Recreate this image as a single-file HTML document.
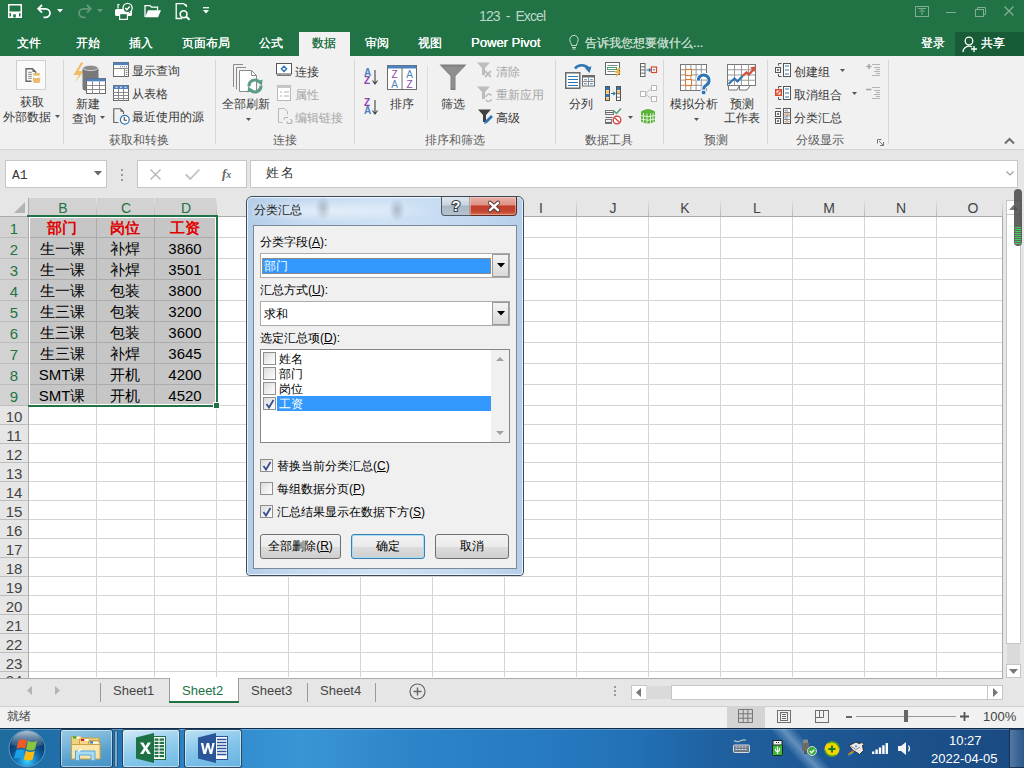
<!DOCTYPE html>
<html><head><meta charset="utf-8"><style>
*{box-sizing:border-box;margin:0;padding:0}
html,body{width:1024px;height:768px;overflow:hidden;background:#e6e6e6;font-family:"Liberation Sans",sans-serif;position:relative}
.a{position:absolute}
.t{position:absolute;white-space:nowrap;line-height:1}
svg{position:absolute;overflow:visible}
.tab{position:absolute;top:37px;color:#fff;font-size:12px;line-height:12px;white-space:nowrap;text-shadow:0.35px 0 0}
.r{position:absolute;font-size:12px;line-height:12px;color:#383838;white-space:nowrap}
.g{position:absolute;font-size:12px;line-height:12px;color:#5a5a5a;white-space:nowrap}
.d{color:#a6a6a6}
.sep{position:absolute;top:60px;width:1px;height:84px;background:#d6d6d6}
.gl{position:absolute;background:#d4d4d4}
.cell{position:absolute;font-size:15px;line-height:15px;white-space:nowrap;color:#000}
.dl{position:absolute;font-size:12px;line-height:12px;color:#000;white-space:nowrap}
.cb{position:absolute;width:13px;height:13px;border:1px solid #8f8f8f;background:linear-gradient(135deg,#dcdcdc,#fff)}
.btn{position:absolute;height:25px;border:1px solid #707070;border-radius:3px;background:linear-gradient(#f2f2f2 0,#ebebeb 50%,#dddddd 51%,#cfcfcf 100%);font-size:12px;line-height:22px;text-align:center;color:#000}
</style></head><body>
<div class="a" style="left:0;top:0;width:1024px;height:56px;background:#217346"></div>
<div class="a" style="left:0;top:32px;width:59px;height:24px;background:#227447"></div>
<svg style="left:8px;top:4px" width="14" height="14" viewBox="0 0 14 14"><rect x="0.75" y="0.75" width="12.5" height="12.5" fill="none" stroke="#fff" stroke-width="1.5"/><rect x="0.75" y="7.5" width="12.5" height="1.6" fill="#fff"/><rect x="3" y="8.5" width="8" height="5" fill="#fff"/><rect x="5.2" y="10.3" width="2.6" height="3.2" fill="#217346"/></svg>
<svg style="left:37px;top:4px" width="15" height="14" viewBox="0 0 15 14"><path d="M5 1L1.2 4.8 5 8.6" fill="none" stroke="#fff" stroke-width="1.8"/><path d="M1.5 4.8H8.5a4.5 4.3 0 0 1 0 8.6H6.5" fill="none" stroke="#fff" stroke-width="1.8"/></svg>
<svg style="left:57px;top:9px" width="6" height="4" viewBox="0 0 6 4"><path d="M0 0h6L3 3.5z" fill="#fff"/></svg>
<svg style="left:77px;top:4px" width="15" height="14" viewBox="0 0 15 14"><path d="M10 1l3.8 3.8L10 8.6" fill="none" stroke="#5f9a79" stroke-width="1.8"/><path d="M13.5 4.8H6.5a4.5 4.3 0 0 0 0 8.6H8.5" fill="none" stroke="#5f9a79" stroke-width="1.8"/></svg>
<svg style="left:97px;top:9px" width="6" height="4" viewBox="0 0 6 4"><path d="M0 0h6L3 3.5z" fill="#5f9a79"/></svg>
<svg style="left:115px;top:3px" width="18" height="17" viewBox="0 0 18 17"><path d="M4.5 1.5h-1.5v4" fill="none" stroke="#fff" stroke-width="1.2"/><path d="M1.5 6h14a1.5 1.5 0 0 1 1.5 1.5v4a1.5 1.5 0 0 1-1.5 1.5h-14a1.5 1.5 0 0 1-1.5-1.5v-4A1.5 1.5 0 0 1 1.5 6z" fill="#fff"/><rect x="4.6" y="10.6" width="7.8" height="5.8" fill="#217346" stroke="#fff" stroke-width="1.2"/><circle cx="12.6" cy="5" r="4.6" fill="#217346" stroke="#fff" stroke-width="1.3"/><path d="M10.3 5l1.6 1.7 2.8-3.2" fill="none" stroke="#fff" stroke-width="1.4"/><circle cx="14.6" cy="9.2" r="0.8" fill="#217346"/></svg>
<svg style="left:144px;top:4px" width="18" height="14" viewBox="0 0 18 14"><path d="M1 13V1.6h5l1.5 1.5H13.5V6" fill="none" stroke="#fff" stroke-width="1.3"/><path d="M1 13.2L4 6.2H17L14 13.2z" fill="#fff"/></svg>
<svg style="left:175px;top:3px" width="16" height="17" viewBox="0 0 16 17"><path d="M7 15.5H1.2V0.7h7.8M9 0.7l3 3" fill="none" stroke="#fff" stroke-width="1.3"/><path d="M9.5 1.5l1.8 0.2 0.2 1.8" fill="none" stroke="#fff" stroke-width="0.9"/><circle cx="8.6" cy="11.2" r="3.4" fill="none" stroke="#fff" stroke-width="1.6"/><path d="M11 13.6l3.6 3.2" stroke="#fff" stroke-width="2"/></svg>
<svg style="left:203px;top:7px" width="6" height="7" viewBox="0 0 6 7"><path d="M0 0.7h6" stroke="#fff" stroke-width="1.3"/><path d="M0 3h6L3 6.5z" fill="#fff"/></svg>
<div class="t" style="left:479px;top:9px;font-size:14px;color:#bcd6c6;letter-spacing:-0.9px;word-spacing:3px">123 - Excel</div>
<svg style="left:915px;top:6px" width="14" height="11" viewBox="0 0 14 11"><rect x="0.5" y="0.5" width="13" height="10" fill="none" stroke="#7fae93"/><path d="M3 2.5h8M7 4v5M4.5 6L7 3.5 9.5 6" fill="none" stroke="#7fae93"/></svg>
<div class="a" style="left:946px;top:12px;width:10px;height:1px;background:#7fae93"></div>
<svg style="left:975px;top:7px" width="11" height="10" viewBox="0 0 11 10"><rect x="0.5" y="2.5" width="8" height="7" fill="none" stroke="#7fae93"/><path d="M2.5 2.5V0.5h8v7h-2" fill="none" stroke="#7fae93"/></svg>
<svg style="left:1004px;top:6px" width="10" height="10" viewBox="0 0 10 10"><path d="M0.5 0.5l9 9M9.5 0.5l-9 9" stroke="#7fae93" stroke-width="1.4"/></svg>
<div class="tab" style="left:17px">文件</div>
<div class="tab" style="left:76px">开始</div>
<div class="tab" style="left:129px">插入</div>
<div class="tab" style="left:182px">页面布局</div>
<div class="tab" style="left:259px">公式</div>
<div class="tab" style="left:365px">审阅</div>
<div class="tab" style="left:418px">视图</div>
<div class="a" style="left:299px;top:32px;width:51px;height:24px;background:#f1f1f1"></div>
<div class="tab" style="left:312px;color:#217346">数据</div>
<div class="tab" style="left:471px;top:36px;font-size:13px;line-height:13px">Power Pivot</div>
<svg style="left:569px;top:35px" width="10" height="15" viewBox="0 0 10 15"><path d="M2.5 10.5C2.5 8 0.8 7 0.8 4.6a4.2 4.2 0 0 1 8.4 0C9.2 7 7.5 8 7.5 10.5z" fill="none" stroke="#c4dccd" stroke-width="1"/><path d="M3 12.5h4M3.5 14h3" stroke="#c4dccd"/></svg>
<div class="tab" style="left:585px;color:#c4dccd">告诉我您想要做什么...</div>
<div class="tab" style="left:921px">登录</div>
<div class="a" style="left:955px;top:32px;width:69px;height:24px;background:#185c37"></div>
<svg style="left:962px;top:36px" width="16" height="17" viewBox="0 0 16 17"><circle cx="7" cy="5" r="3.8" fill="none" stroke="#fff" stroke-width="1.3"/><path d="M1 16a6 6 0 0 1 9-5" fill="none" stroke="#fff" stroke-width="1.3"/><path d="M12 10v6M9 13h6" stroke="#fff" stroke-width="1.3"/></svg>
<div class="tab" style="left:981px">共享</div>
<div class="a" style="left:0;top:56px;width:1024px;height:94px;background:#f1f1f1;border-bottom:1px solid #d4d4d4"></div>
<div class="sep" style="left:63px;top:60px;height:84px"></div>
<div class="sep" style="left:215px;top:60px;height:84px"></div>
<div class="sep" style="left:354px;top:60px;height:84px"></div>
<div class="sep" style="left:555px;top:60px;height:84px"></div>
<div class="sep" style="left:663px;top:60px;height:84px"></div>
<div class="sep" style="left:767px;top:60px;height:84px"></div>
<div class="sep" style="left:888px;top:60px;height:84px"></div>
<div class="sep" style="left:427px;top:66px;height:55px;background:#dedede"></div>
<div class="g" style="left:109px;top:134px">获取和转换</div>
<div class="g" style="left:273px;top:134px">连接</div>
<div class="g" style="left:425px;top:134px">排序和筛选</div>
<div class="g" style="left:585px;top:134px">数据工具</div>
<div class="g" style="left:704px;top:134px">预测</div>
<div class="g" style="left:796px;top:134px">分级显示</div>
<svg style="left:877px;top:139px" width="7" height="7" viewBox="0 0 7 7"><path d="M0.5 0.5h4M0.5 0.5v4M2 2l4.5 4.5M6.5 3v3.5H3" fill="none" stroke="#777" stroke-width="1"/></svg>
<svg style="left:1004px;top:137px" width="11" height="8" viewBox="0 0 11 8"><path d="M1 6.5l4.5-4.5L10 6.5" fill="none" stroke="#6e6e6e" stroke-width="2"/></svg>
<div class="a" style="left:16px;top:60px;width:30px;height:30px;background:#fafafa;border:1px solid #cfcfcf"></div>
<svg style="left:25px;top:68px" width="16" height="16" viewBox="0 0 16 16"><path d="M6.5 13.25H1V0.75H7.5L10.75 4V5" fill="none" stroke="#666" stroke-width="1.3"/><path d="M7.5 0.75V4H10.75z" fill="#666"/><path d="M3.2 4.3h3.6M3.2 6.3h3.6M3.2 8.3h3.6M3.2 10.3h3.6" stroke="#8a8a8a"/><ellipse cx="11.6" cy="6.2" rx="3.6" ry="1.5" fill="#e8bd70"/><path d="M8 8.6V13.5A3.6 1.5 0 0 0 15.2 13.5V8.6A3.6 1.5 0 0 1 8 8.6z" fill="#e8bd70"/></svg>
<div class="r" style="left:20px;top:96px">获取</div>
<div class="r" style="left:3px;top:111px">外部数据</div>
<svg style="left:55px;top:115px" width="5" height="3" viewBox="0 0 5 3"><path d="M0 0h5L2.5 3z" fill="#555"/></svg>
<svg style="left:72px;top:62px" width="34" height="32" viewBox="0 0 34 32"><path d="M9 0.5L1.5 13h5.5L2.5 21l9.5-12H6.5l5-8.5z" fill="#f0bd66"/><path d="M10.5 6.5a8 3 0 0 1 16 0v20a8 3 0 0 1-16 0z" fill="#787878"/><ellipse cx="18.5" cy="6" rx="7.5" ry="2.6" fill="#8c8c8c" stroke="#e8e8e8" stroke-width="0.8"/><rect x="14.5" y="16.5" width="19" height="15" fill="#fff" stroke="#6b6b6b"/><rect x="14.5" y="16.5" width="19" height="2.8" fill="#4f81bd"/><path d="M14.5 23.5h19M14.5 27.5h19M20.5 19.3v12.2M27.5 19.3v12.2" stroke="#8a8a8a"/></svg>
<div class="r" style="left:76px;top:98px">新建</div>
<div class="r" style="left:72px;top:113px">查询</div>
<svg style="left:100px;top:116px" width="5" height="3" viewBox="0 0 5 3"><path d="M0 0h5L2.5 3z" fill="#555"/></svg>
<svg style="left:113px;top:62px" width="16" height="15" viewBox="0 0 16 15"><rect x="0.5" y="0.5" width="15" height="14" fill="#fff" stroke="#6b6b6b"/><rect x="0.5" y="0.5" width="15" height="2.6" fill="#4f81bd"/><path d="M0.5 6.5h15M11.5 6.5v8" stroke="#8a8a8a"/><path d="M7 4.8h1M9 4.8h1M11 4.8h1M13 4.8h1M12.8 8.5h1.5M12.8 10.5h1.5M12.8 12.5h1.5" stroke="#777"/></svg>
<div class="r" style="left:132px;top:65px">显示查询</div>
<svg style="left:113px;top:85px" width="16" height="16" viewBox="0 0 16 16"><rect x="0.5" y="0.5" width="15" height="15" fill="#fff" stroke="#6b6b6b"/><rect x="0.5" y="0.5" width="15" height="3.5" fill="#4f81bd"/><path d="M2.5 2.2h2M7 2.2h2M11.5 2.2h2" stroke="#fff"/><path d="M0.5 7.5h15M0.5 10.5h15M0.5 13.5h15M5.5 4v12M10.5 4v12" stroke="#8a8a8a"/></svg>
<div class="r" style="left:132px;top:88px">从表格</div>
<svg style="left:113px;top:108px" width="17" height="17" viewBox="0 0 17 17"><path d="M5.5 14.5H0.75V0.75H7.5L10.5 3.8V6" fill="none" stroke="#666" stroke-width="1.2"/><path d="M7.5 0.75V3.8H10.5z" fill="#666"/><circle cx="11.8" cy="11.8" r="4.4" fill="#fff" stroke="#2e75b6" stroke-width="1.2"/><path d="M11.3 9v3.3h2.6" fill="none" stroke="#444" stroke-width="1.1"/></svg>
<div class="r" style="left:132px;top:111px">最近使用的源</div>
<svg style="left:232px;top:63px" width="32" height="32" viewBox="0 0 32 32"><path d="M1.5 24V1.5H11" fill="none" stroke="#8a8a8a"/><path d="M4.5 26.5V4.5H14" fill="none" stroke="#8a8a8a"/><path d="M7.5 28.5V7.5H19.5l5 5V28.5z" fill="#fff" stroke="#8a8a8a"/><path d="M19.5 7.5v5h5" fill="none" stroke="#8a8a8a"/><circle cx="23" cy="23" r="8" fill="#f1f1f1" opacity="0"/><path d="M17 23.5A6 6 0 0 1 27.6 19.2" fill="none" stroke="#5a9e82" stroke-width="3"/><path d="M24.6 18.6L30.6 16.4L29.8 22.6z" fill="#5a9e82"/><path d="M29 22.5A6 6 0 0 1 18.4 26.8" fill="none" stroke="#5a9e82" stroke-width="3"/><path d="M21.4 27.4L15.4 29.6L16.2 23.4z" fill="#5a9e82"/></svg>
<div class="r" style="left:222px;top:98px">全部刷新</div>
<svg style="left:246px;top:118px" width="5" height="3" viewBox="0 0 5 3"><path d="M0 0h5L2.5 3z" fill="#555"/></svg>
<svg style="left:276px;top:63px" width="16" height="14" viewBox="0 0 16 14"><rect x="0.5" y="0.5" width="15" height="10.5" fill="#fff" stroke="#555"/><path d="M1 12.5h14" stroke="#777"/><path d="M4 11v2M12 11v2" stroke="#777"/><path d="M8 3.2l2.6 2.6L8 8.4 5.4 5.8z" fill="none" stroke="#2e75b6" stroke-width="1.4"/></svg>
<div class="r" style="left:295px;top:66px">连接</div>
<svg style="left:277px;top:85px" width="14" height="16" viewBox="0 0 14 16"><rect x="0.5" y="0.5" width="13" height="15" fill="#fff" stroke="#b8b8b8"/><rect x="0.5" y="0.5" width="13" height="2.5" fill="#c8c8c8"/><path d="M3 7h2M7 7h5M3 11h2M7 11h5" stroke="#b0b0b0"/></svg>
<div class="r d" style="left:295px;top:89px">属性</div>
<svg style="left:278px;top:108px" width="15" height="16" viewBox="0 0 15 16"><path d="M0.5 0.5h6l3 3v3M0.5 0.5v14h4" fill="none" stroke="#b8b8b8"/><path d="M6 11.5a2 2 0 0 1 2-2h2M9 13.5a2 2 0 0 0 2 2h1a2 2 0 0 0 0-4" fill="none" stroke="#b0b0b0" stroke-width="1.2"/></svg>
<div class="r d" style="left:295px;top:112px">编辑链接</div>
<div class="t" style="left:364px;top:69px;font-size:10px;line-height:8px;color:#4f81bd;font-weight:bold">A<br><span style="color:#8e44ad">Z</span></div>
<svg style="left:372px;top:70px" width="6" height="15" viewBox="0 0 6 15"><path d="M3 0v13M0.5 10.5L3 14l2.5-3.5" fill="none" stroke="#444" stroke-width="1.1"/></svg>
<div class="t" style="left:364px;top:99px;font-size:10px;line-height:8px;color:#8e44ad;font-weight:bold">Z<br><span style="color:#4f81bd">A</span></div>
<svg style="left:372px;top:100px" width="6" height="15" viewBox="0 0 6 15"><path d="M3 0v13M0.5 10.5L3 14l2.5-3.5" fill="none" stroke="#444" stroke-width="1.1"/></svg>
<svg style="left:387px;top:65px" width="30" height="25" viewBox="0 0 30 25"><rect x="0.5" y="0.5" width="29" height="24" fill="#fff" stroke="#6b6b6b"/><rect x="0.5" y="0.5" width="29" height="3" fill="#4f81bd"/><path d="M15 3v22" stroke="#6b6b6b"/><text x="7.5" y="13" font-size="10" font-family="Liberation Sans" text-anchor="middle" fill="#8e44ad">Z</text><text x="7.5" y="23" font-size="10" font-family="Liberation Sans" text-anchor="middle" fill="#4f81bd">A</text><text x="22.5" y="13" font-size="10" font-family="Liberation Sans" text-anchor="middle" fill="#4f81bd">A</text><text x="22.5" y="23" font-size="10" font-family="Liberation Sans" text-anchor="middle" fill="#8e44ad">Z</text></svg>
<div class="r" style="left:390px;top:98px">排序</div>
<svg style="left:439px;top:64px" width="28" height="27" viewBox="0 0 28 27"><path d="M0.5 0.5h27L16.5 12v14h-5V12z" fill="#7f7f7f"/><path d="M3 2.5h22l-9.5 10v12h-3v-12z" fill="#8f8f8f"/></svg>
<div class="r" style="left:441px;top:98px">筛选</div>
<svg style="left:477px;top:62px" width="16" height="16" viewBox="0 0 16 16"><path d="M0 0.5h13L8 6v7H5V6z" fill="#bdbdbd"/><path d="M8 9l6 6M14 9l-6 6" stroke="#bdbdbd" stroke-width="1.8"/></svg>
<div class="r d" style="left:496px;top:66px">清除</div>
<svg style="left:477px;top:86px" width="16" height="16" viewBox="0 0 16 16"><path d="M0 0.5h13L8 6v7H5V6z" fill="#bdbdbd"/><path d="M9 11a3 3 0 0 1 5.5-1.5M14.5 13a3 3 0 0 1-5.5 1" fill="none" stroke="#bdbdbd" stroke-width="1.5"/></svg>
<div class="r d" style="left:496px;top:89px">重新应用</div>
<svg style="left:478px;top:109px" width="16" height="16" viewBox="0 0 16 16"><path d="M0 0.5h13L8 6v7H5V6z" fill="#404040"/><path d="M6 15l1-3 6-6 2 2-6 6z" fill="#2e75b6"/></svg>
<div class="r" style="left:496px;top:112px">高级</div>
<svg style="left:565px;top:63px" width="32" height="26" viewBox="0 0 32 26"><path d="M10 5.5A8 7 0 0 1 23.5 5.5" fill="none" stroke="#2e75b6" stroke-width="2.4"/><path d="M19.5 4.5L26.5 3.5L24.5 10z" fill="#2e75b6"/><rect x="0.75" y="9.75" width="14" height="15.5" fill="#fff" stroke="#6b6b6b" stroke-width="1.5"/><path d="M3 13.5h10M3 16.5h10M3 19.5h10M3 22.5h10" stroke="#2e75b6"/><rect x="17.5" y="12.5" width="12" height="10.5" fill="#fff" stroke="#6b6b6b"/><rect x="17.5" y="12.5" width="12" height="2" fill="#6b6b6b"/><path d="M23.5 14.5v8.5M17.5 18.5h12" stroke="#8a8a8a"/><path d="M19.2 16.8h2.6M25.2 16.8h2.6M19.2 20.8h2.6M25.2 20.8h2.6" stroke="#2e75b6" stroke-width="1.1"/></svg>
<div class="r" style="left:569px;top:98px">分列</div>
<svg style="left:605px;top:62px" width="17" height="16" viewBox="0 0 17 16"><rect x="0.5" y="0.5" width="14" height="12" fill="#fff" stroke="#666"/><path d="M2.5 3.5h10M2.5 9.5h8" stroke="#888"/><rect x="2.5" y="5.5" width="9" height="2" fill="none" stroke="#4ea072"/><path d="M13 6l-3 5h2.5l-2 5 5.5-6.5h-2.5l2-3.5z" fill="#f2b43e"/></svg>
<svg style="left:605px;top:86px" width="17" height="15" viewBox="0 0 17 15"><rect x="0.5" y="0.5" width="4" height="14" fill="#fff" stroke="#555"/><rect x="1" y="1" width="3" height="3" fill="#2e75b6"/><rect x="1" y="4.5" width="3" height="3" fill="#f0c060"/><rect x="1" y="8" width="3" height="3" fill="#2e75b6"/><rect x="1" y="11.5" width="3" height="2.5" fill="#f0c060"/><rect x="11.5" y="0.5" width="4" height="14" fill="#fff" stroke="#555"/><rect x="12" y="1" width="3" height="3" fill="#2e75b6"/><rect x="12" y="4.5" width="3" height="3" fill="#f0c060"/><path d="M12 7.8h3M12 11.2h3" stroke="#555" stroke-width="0.8"/><path d="M6 7.5h4M8.3 5.8L10 7.5 8.3 9.2" fill="none" stroke="#2e75b6" stroke-width="1.2"/></svg>
<svg style="left:605px;top:108px" width="17" height="16" viewBox="0 0 17 16"><path d="M0.5 4.5h8M0.5 9.5h7M0.5 14.5h6" stroke="#666"/><rect x="0.5" y="2.5" width="8" height="4" fill="none" stroke="#777"/><rect x="0.5" y="11.5" width="6" height="4" fill="none" stroke="#777"/><path d="M9 3l2.5 2.5L16 0.5" fill="none" stroke="#4ea072" stroke-width="1.5"/><circle cx="12" cy="12" r="3.8" fill="#fff" stroke="#d43a3a" stroke-width="1.3"/><path d="M9.5 9.5l5 5" stroke="#d43a3a" stroke-width="1.3"/></svg>
<svg style="left:628px;top:116px" width="5" height="3" viewBox="0 0 5 3"><path d="M0 0h5L2.5 3z" fill="#555"/></svg>
<svg style="left:640px;top:63px" width="17" height="14" viewBox="0 0 17 14"><rect x="0.5" y="0.5" width="4.5" height="13" fill="#fff" stroke="#666"/><path d="M0.5 3.8h4.5M0.5 7h4.5M0.5 10.2h4.5" stroke="#666"/><path d="M6.5 7h4M9 5.5L10.5 7 9 8.5" fill="none" stroke="#2e75b6" stroke-width="1.2"/><rect x="11.5" y="4" width="5" height="5.5" fill="#fff" stroke="#d9482a" stroke-width="1.2"/><rect x="13.2" y="5.9" width="1.6" height="1.6" fill="#777"/></svg>
<svg style="left:640px;top:85px" width="17" height="17" viewBox="0 0 17 17"><rect x="0.5" y="6.5" width="5" height="5" fill="#fff" stroke="#b8b8b8"/><rect x="11.5" y="0.5" width="5" height="5" fill="#fff" stroke="#b8b8b8"/><rect x="11.5" y="11.5" width="5" height="5" fill="#fff" stroke="#b8b8b8"/><path d="M5.5 9l6-6M5.5 9l6 5" stroke="#b8b8b8"/></svg>
<svg style="left:640px;top:108px" width="16" height="16" viewBox="0 0 16 16"><path d="M1 3.5Q8 -1.5 15 3.5V13.5Q8 17.5 1 13.5z" fill="#5cb33a"/><path d="M3.5 5v9M7 5.5v9.5M10.5 5.5v9.5M13 5v8.5M1 7.5q7 2.5 14 0M1 11q7 2.5 14 0" fill="none" stroke="#fff" stroke-width="0.9" opacity="0.85"/></svg>
<svg style="left:680px;top:64px" width="32" height="31" viewBox="0 0 32 31"><rect x="0.5" y="0.5" width="26" height="26" fill="#fff" stroke="#777"/><path d="M5.7 0.5v26M10.9 0.5v26M16.1 0.5v26M21.3 0.5v26M0.5 5.7h26M0.5 10.9h26M0.5 16.1h26M0.5 21.3h26" stroke="#8a8a8a" stroke-width="0.9"/><rect x="5.5" y="5.5" width="6" height="6" fill="#fff" stroke="#e87722" stroke-width="1.1"/><rect x="5.5" y="15.5" width="6" height="6" fill="#fff" stroke="#e87722" stroke-width="1.1"/><path d="M18.3 16.5A5.4 5.4 0 1 1 26.8 20.8Q23.6 22.5 23.6 25.5" fill="none" stroke="#fff" stroke-width="5"/><path d="M18.3 16.5A5.4 5.4 0 1 1 26.8 20.8Q23.6 22.5 23.6 25.5" fill="none" stroke="#2e75b6" stroke-width="3"/><rect x="20.8" y="26" width="5.5" height="4.8" fill="#fff"/><rect x="21.8" y="26.8" width="3.6" height="3.4" fill="#2e75b6"/></svg>
<div class="r" style="left:670px;top:98px">模拟分析</div>
<svg style="left:694px;top:118px" width="5" height="3" viewBox="0 0 5 3"><path d="M0 0h5L2.5 3z" fill="#555"/></svg>
<svg style="left:727px;top:64px" width="30" height="28" viewBox="0 0 30 28"><path d="M1.5 21.5v4.5h8.5l2.5-4.5M12.5 21.5v4.5h7.5l3-4.5" fill="#fff" stroke="#777"/><rect x="0.5" y="0.5" width="28" height="21" fill="#fff" stroke="#777"/><path d="M7.5 0.5v21M14.5 0.5v21M21.5 0.5v21M0.5 5.75h28M0.5 11h28M0.5 16.25h28" stroke="#999"/><path d="M1.5 20L7.5 14.5L10.5 17.5L15.5 12" fill="none" stroke="#2e75b6" stroke-width="2.2"/><path d="M15.5 12L19.5 8.5L22 10.5L26.5 5.5" fill="none" stroke="#d4503a" stroke-width="2.2"/><path d="M23 3.5L28.5 2.3L27.5 8z" fill="#d4503a"/></svg>
<div class="r" style="left:730px;top:98px">预测</div>
<div class="r" style="left:724px;top:112px">工作表</div>
<svg style="left:775px;top:63px" width="16" height="14" viewBox="0 0 16 14"><path d="M6.5 0.5H3.5V2.5M3.5 11V13.5H6.5" fill="none" stroke="#555"/><rect x="0.5" y="4.5" width="5" height="5" fill="#fff" stroke="#555"/><path d="M3 5.8v2.4M1.8 7h2.4" stroke="#555"/><rect x="8.5" y="0.5" width="7" height="13" fill="#fff" stroke="#555"/><path d="M10 3h4M10 7h4M10 11h4" stroke="#2e75b6" stroke-width="1.2"/></svg>
<div class="r" style="left:794px;top:66px">创建组</div>
<svg style="left:840px;top:69px" width="5" height="3" viewBox="0 0 5 3"><path d="M0 0h5L2.5 3z" fill="#555"/></svg>
<svg style="left:775px;top:86px" width="16" height="14" viewBox="0 0 16 14"><path d="M6.5 0.5H3.5V2.5M3.5 11V13.5H6.5" fill="none" stroke="#555"/><rect x="0.75" y="3.75" width="5.5" height="5.5" fill="#fff" stroke="#d9482a" stroke-width="1.5"/><path d="M1.5 8.5L5.5 4.5" stroke="#d9482a" stroke-width="1.2"/><rect x="8.5" y="0.5" width="7" height="13" fill="#fff" stroke="#555"/><path d="M10 3h4M10 7h4M10 11h4" stroke="#2e75b6" stroke-width="1.2"/></svg>
<div class="r" style="left:794px;top:89px">取消组合</div>
<svg style="left:852px;top:92px" width="5" height="3" viewBox="0 0 5 3"><path d="M0 0h5L2.5 3z" fill="#555"/></svg>
<svg style="left:775px;top:108px" width="16" height="16" viewBox="0 0 16 16"><path d="M0.5 0.5H6" stroke="#666"/><rect x="0.5" y="3.5" width="5" height="5" fill="#fff" stroke="#555"/><path d="M3 4.8v2.4M1.8 6h2.4" stroke="#555"/><rect x="0.5" y="10.5" width="5" height="5" fill="#fff" stroke="#555"/><path d="M3 11.8v2.4M1.8 13h2.4" stroke="#555"/><rect x="8.5" y="0.5" width="7" height="15" fill="#fff" stroke="#555"/><path d="M8.5 4.5h7M8.5 8h7M8.5 11.5h7M12 0.5v15" stroke="#8a8a8a"/><path d="M10.2 2v1.3M10.2 9.3v1.3" stroke="#2e75b6" stroke-width="1.1"/><path d="M10.2 5.6v1.3M13.8 5.6v1.3M10.2 12.9v1.3M13.8 12.9v1.3" stroke="#e87722" stroke-width="1.1"/></svg>
<div class="r" style="left:794px;top:112px">分类汇总</div>
<svg style="left:866px;top:63px" width="15" height="14" viewBox="0 0 15 14"><path d="M3 1v5M0.5 3.5h5" stroke="#a8a8a8" stroke-width="1.6"/><path d="M6 1.5h8M8 4.5h6M10 6.5h4M8 8.5h6M10 10.5h4M6 12.5h8" stroke="#b4b4b4"/></svg>
<svg style="left:866px;top:86px" width="15" height="14" viewBox="0 0 15 14"><path d="M0 3.5h5.5" stroke="#a8a8a8" stroke-width="1.6"/><path d="M6 1.5h8M8 4.5h6M10 6.5h4M8 8.5h6M10 10.5h4M6 12.5h8" stroke="#b4b4b4"/></svg>
<div class="a" style="left:5px;top:160px;width:102px;height:28px;background:#fff;border:1px solid #c6c6c6"></div>
<div class="t" style="left:12px;top:169px;font-family:'Liberation Mono',monospace;font-size:13px;color:#3a3a3a">A1</div>
<svg style="left:94px;top:171px" width="8" height="5" viewBox="0 0 8 5"><path d="M0 0h8L4 4.5z" fill="#666"/></svg>
<div class="a" style="left:121px;top:169px;width:2px;height:2px;background:#9a9a9a"></div>
<div class="a" style="left:121px;top:174px;width:2px;height:2px;background:#9a9a9a"></div>
<div class="a" style="left:121px;top:179px;width:2px;height:2px;background:#9a9a9a"></div>
<div class="a" style="left:137px;top:160px;width:110px;height:28px;background:#fff;border:1px solid #c6c6c6"></div>
<svg style="left:150px;top:169px" width="11" height="11" viewBox="0 0 11 11"><path d="M0.5 0.5l10 10M10.5 0.5l-10 10" stroke="#b4b4b4" stroke-width="1.4"/></svg>
<svg style="left:185px;top:169px" width="15" height="11" viewBox="0 0 15 11"><path d="M0.8 5.5l4.5 4.5 9-9.5" fill="none" stroke="#c0c0c0" stroke-width="1.8"/></svg>
<div class="t" style="left:222px;top:167px;font-family:'Liberation Serif',serif;font-style:italic;font-weight:bold;font-size:13px;color:#666">f<span style="font-size:10px">x</span></div>
<div class="a" style="left:250px;top:160px;width:768px;height:28px;background:#fff;border:1px solid #c6c6c6"></div>
<div class="t" style="left:266px;top:166px;font-size:13px;color:#333;letter-spacing:2px;font-weight:300">姓名</div>
<svg style="left:1006px;top:171px" width="8" height="5" viewBox="0 0 8 5"><path d="M0.5 0.5l3.5 3.5 3.5-3.5" fill="none" stroke="#999" stroke-width="1.1"/></svg>
<div class="a" style="left:28px;top:216px;width:975px;height:463px;background:#fff"></div>
<div class="a" style="left:28px;top:216px;width:188px;height:189px;background:#c6c6c6"></div>
<div class="a" style="left:0;top:198px;width:1002px;height:18px;background:#e6e6e6"></div>
<div class="a" style="left:28px;top:198px;width:188px;height:18px;background:#d2d2d2"></div>
<div class="a" style="left:0;top:216px;width:28px;height:462px;background:#e6e6e6"></div>
<div class="a" style="left:0;top:216px;width:28px;height:189px;background:#d2d2d2"></div>
<svg style="left:14px;top:202px" width="11" height="11" viewBox="0 0 11 11"><path d="M11 0v11H0z" fill="#b4b4b4"/></svg>
<div class="gl" style="left:96px;top:216px;width:1px;height:189px;background:#ababab"></div>
<div class="a" style="left:96px;top:198px;width:1px;height:18px;background:linear-gradient(#e6e6e6,#b8b8b8)"></div>
<div class="t" style="left:29px;width:68px;top:201px;text-align:center;font-size:14px;color:#217346">B</div>
<div class="gl" style="left:154px;top:216px;width:1px;height:189px;background:#ababab"></div>
<div class="a" style="left:154px;top:198px;width:1px;height:18px;background:linear-gradient(#e6e6e6,#b8b8b8)"></div>
<div class="t" style="left:97px;width:58px;top:201px;text-align:center;font-size:14px;color:#217346">C</div>
<div class="gl" style="left:216px;top:216px;width:1px;height:189px;background:#ababab"></div>
<div class="a" style="left:216px;top:198px;width:1px;height:18px;background:linear-gradient(#e6e6e6,#b8b8b8)"></div>
<div class="t" style="left:155px;width:62px;top:201px;text-align:center;font-size:14px;color:#217346">D</div>
<div class="gl" style="left:288px;top:216px;width:1px;height:461px;background:#d4d4d4"></div>
<div class="a" style="left:288px;top:198px;width:1px;height:18px;background:linear-gradient(#e6e6e6,#b8b8b8)"></div>
<div class="t" style="left:217px;width:72px;top:201px;text-align:center;font-size:14px;color:#444">E</div>
<div class="gl" style="left:360px;top:216px;width:1px;height:461px;background:#d4d4d4"></div>
<div class="a" style="left:360px;top:198px;width:1px;height:18px;background:linear-gradient(#e6e6e6,#b8b8b8)"></div>
<div class="t" style="left:289px;width:72px;top:201px;text-align:center;font-size:14px;color:#444">F</div>
<div class="gl" style="left:432px;top:216px;width:1px;height:461px;background:#d4d4d4"></div>
<div class="a" style="left:432px;top:198px;width:1px;height:18px;background:linear-gradient(#e6e6e6,#b8b8b8)"></div>
<div class="t" style="left:361px;width:72px;top:201px;text-align:center;font-size:14px;color:#444">G</div>
<div class="gl" style="left:504px;top:216px;width:1px;height:461px;background:#d4d4d4"></div>
<div class="a" style="left:504px;top:198px;width:1px;height:18px;background:linear-gradient(#e6e6e6,#b8b8b8)"></div>
<div class="t" style="left:433px;width:72px;top:201px;text-align:center;font-size:14px;color:#444">H</div>
<div class="gl" style="left:576px;top:216px;width:1px;height:461px;background:#d4d4d4"></div>
<div class="a" style="left:576px;top:198px;width:1px;height:18px;background:linear-gradient(#e6e6e6,#b8b8b8)"></div>
<div class="t" style="left:505px;width:72px;top:201px;text-align:center;font-size:14px;color:#444">I</div>
<div class="gl" style="left:648px;top:216px;width:1px;height:461px;background:#d4d4d4"></div>
<div class="a" style="left:648px;top:198px;width:1px;height:18px;background:linear-gradient(#e6e6e6,#b8b8b8)"></div>
<div class="t" style="left:577px;width:72px;top:201px;text-align:center;font-size:14px;color:#444">J</div>
<div class="gl" style="left:720px;top:216px;width:1px;height:461px;background:#d4d4d4"></div>
<div class="a" style="left:720px;top:198px;width:1px;height:18px;background:linear-gradient(#e6e6e6,#b8b8b8)"></div>
<div class="t" style="left:649px;width:72px;top:201px;text-align:center;font-size:14px;color:#444">K</div>
<div class="gl" style="left:792px;top:216px;width:1px;height:461px;background:#d4d4d4"></div>
<div class="a" style="left:792px;top:198px;width:1px;height:18px;background:linear-gradient(#e6e6e6,#b8b8b8)"></div>
<div class="t" style="left:721px;width:72px;top:201px;text-align:center;font-size:14px;color:#444">L</div>
<div class="gl" style="left:864px;top:216px;width:1px;height:461px;background:#d4d4d4"></div>
<div class="a" style="left:864px;top:198px;width:1px;height:18px;background:linear-gradient(#e6e6e6,#b8b8b8)"></div>
<div class="t" style="left:793px;width:72px;top:201px;text-align:center;font-size:14px;color:#444">M</div>
<div class="gl" style="left:936px;top:216px;width:1px;height:461px;background:#d4d4d4"></div>
<div class="a" style="left:936px;top:198px;width:1px;height:18px;background:linear-gradient(#e6e6e6,#b8b8b8)"></div>
<div class="t" style="left:865px;width:72px;top:201px;text-align:center;font-size:14px;color:#444">N</div>
<div class="gl" style="left:1002px;top:216px;width:1px;height:461px;background:#d4d4d4"></div>
<div class="a" style="left:1002px;top:198px;width:1px;height:18px;background:linear-gradient(#e6e6e6,#b8b8b8)"></div>
<div class="t" style="left:937px;width:72px;top:201px;text-align:center;font-size:14px;color:#444">O</div>
<div class="gl" style="left:96px;top:405px;width:1px;height:272px"></div>
<div class="gl" style="left:154px;top:405px;width:1px;height:272px"></div>
<div class="gl" style="left:216px;top:405px;width:1px;height:272px"></div>
<div class="gl" style="left:29px;top:237px;width:187px;height:1px;background:#ababab"></div>
<div class="gl" style="left:216px;top:237px;width:786px;height:1px"></div>
<div class="a" style="left:0;top:237px;width:28px;height:1px;background:#bdbdbd"></div>
<div class="gl" style="left:29px;top:258px;width:187px;height:1px;background:#ababab"></div>
<div class="gl" style="left:216px;top:258px;width:786px;height:1px"></div>
<div class="a" style="left:0;top:258px;width:28px;height:1px;background:#bdbdbd"></div>
<div class="gl" style="left:29px;top:279px;width:187px;height:1px;background:#ababab"></div>
<div class="gl" style="left:216px;top:279px;width:786px;height:1px"></div>
<div class="a" style="left:0;top:279px;width:28px;height:1px;background:#bdbdbd"></div>
<div class="gl" style="left:29px;top:300px;width:187px;height:1px;background:#ababab"></div>
<div class="gl" style="left:216px;top:300px;width:786px;height:1px"></div>
<div class="a" style="left:0;top:300px;width:28px;height:1px;background:#bdbdbd"></div>
<div class="gl" style="left:29px;top:321px;width:187px;height:1px;background:#ababab"></div>
<div class="gl" style="left:216px;top:321px;width:786px;height:1px"></div>
<div class="a" style="left:0;top:321px;width:28px;height:1px;background:#bdbdbd"></div>
<div class="gl" style="left:29px;top:342px;width:187px;height:1px;background:#ababab"></div>
<div class="gl" style="left:216px;top:342px;width:786px;height:1px"></div>
<div class="a" style="left:0;top:342px;width:28px;height:1px;background:#bdbdbd"></div>
<div class="gl" style="left:29px;top:363px;width:187px;height:1px;background:#ababab"></div>
<div class="gl" style="left:216px;top:363px;width:786px;height:1px"></div>
<div class="a" style="left:0;top:363px;width:28px;height:1px;background:#bdbdbd"></div>
<div class="gl" style="left:29px;top:384px;width:187px;height:1px;background:#ababab"></div>
<div class="gl" style="left:216px;top:384px;width:786px;height:1px"></div>
<div class="a" style="left:0;top:384px;width:28px;height:1px;background:#bdbdbd"></div>
<div class="gl" style="left:29px;top:405px;width:187px;height:1px;background:#ababab"></div>
<div class="gl" style="left:216px;top:405px;width:786px;height:1px"></div>
<div class="a" style="left:0;top:405px;width:28px;height:1px;background:#bdbdbd"></div>
<div class="gl" style="left:28px;top:424px;width:974px;height:1px"></div>
<div class="a" style="left:0;top:424px;width:28px;height:1px;background:#bdbdbd"></div>
<div class="gl" style="left:28px;top:443px;width:974px;height:1px"></div>
<div class="a" style="left:0;top:443px;width:28px;height:1px;background:#bdbdbd"></div>
<div class="gl" style="left:28px;top:462px;width:974px;height:1px"></div>
<div class="a" style="left:0;top:462px;width:28px;height:1px;background:#bdbdbd"></div>
<div class="gl" style="left:28px;top:481px;width:974px;height:1px"></div>
<div class="a" style="left:0;top:481px;width:28px;height:1px;background:#bdbdbd"></div>
<div class="gl" style="left:28px;top:500px;width:974px;height:1px"></div>
<div class="a" style="left:0;top:500px;width:28px;height:1px;background:#bdbdbd"></div>
<div class="gl" style="left:28px;top:519px;width:974px;height:1px"></div>
<div class="a" style="left:0;top:519px;width:28px;height:1px;background:#bdbdbd"></div>
<div class="gl" style="left:28px;top:538px;width:974px;height:1px"></div>
<div class="a" style="left:0;top:538px;width:28px;height:1px;background:#bdbdbd"></div>
<div class="gl" style="left:28px;top:557px;width:974px;height:1px"></div>
<div class="a" style="left:0;top:557px;width:28px;height:1px;background:#bdbdbd"></div>
<div class="gl" style="left:28px;top:576px;width:974px;height:1px"></div>
<div class="a" style="left:0;top:576px;width:28px;height:1px;background:#bdbdbd"></div>
<div class="gl" style="left:28px;top:595px;width:974px;height:1px"></div>
<div class="a" style="left:0;top:595px;width:28px;height:1px;background:#bdbdbd"></div>
<div class="gl" style="left:28px;top:614px;width:974px;height:1px"></div>
<div class="a" style="left:0;top:614px;width:28px;height:1px;background:#bdbdbd"></div>
<div class="gl" style="left:28px;top:633px;width:974px;height:1px"></div>
<div class="a" style="left:0;top:633px;width:28px;height:1px;background:#bdbdbd"></div>
<div class="gl" style="left:28px;top:652px;width:974px;height:1px"></div>
<div class="a" style="left:0;top:652px;width:28px;height:1px;background:#bdbdbd"></div>
<div class="gl" style="left:28px;top:671px;width:974px;height:1px"></div>
<div class="a" style="left:0;top:671px;width:28px;height:1px;background:#bdbdbd"></div>
<div class="t" style="left:0;width:28px;top:221px;text-align:center;font-size:15px;color:#217346">1</div>
<div class="t" style="left:0;width:28px;top:242px;text-align:center;font-size:15px;color:#217346">2</div>
<div class="t" style="left:0;width:28px;top:263px;text-align:center;font-size:15px;color:#217346">3</div>
<div class="t" style="left:0;width:28px;top:284px;text-align:center;font-size:15px;color:#217346">4</div>
<div class="t" style="left:0;width:28px;top:305px;text-align:center;font-size:15px;color:#217346">5</div>
<div class="t" style="left:0;width:28px;top:326px;text-align:center;font-size:15px;color:#217346">6</div>
<div class="t" style="left:0;width:28px;top:347px;text-align:center;font-size:15px;color:#217346">7</div>
<div class="t" style="left:0;width:28px;top:368px;text-align:center;font-size:15px;color:#217346">8</div>
<div class="t" style="left:0;width:28px;top:389px;text-align:center;font-size:15px;color:#217346">9</div>
<div class="t" style="left:0;width:28px;top:409px;text-align:center;font-size:15px;color:#444">10</div>
<div class="t" style="left:0;width:28px;top:428px;text-align:center;font-size:15px;color:#444">11</div>
<div class="t" style="left:0;width:28px;top:447px;text-align:center;font-size:15px;color:#444">12</div>
<div class="t" style="left:0;width:28px;top:466px;text-align:center;font-size:15px;color:#444">13</div>
<div class="t" style="left:0;width:28px;top:485px;text-align:center;font-size:15px;color:#444">14</div>
<div class="t" style="left:0;width:28px;top:504px;text-align:center;font-size:15px;color:#444">15</div>
<div class="t" style="left:0;width:28px;top:523px;text-align:center;font-size:15px;color:#444">16</div>
<div class="t" style="left:0;width:28px;top:542px;text-align:center;font-size:15px;color:#444">17</div>
<div class="t" style="left:0;width:28px;top:561px;text-align:center;font-size:15px;color:#444">18</div>
<div class="t" style="left:0;width:28px;top:580px;text-align:center;font-size:15px;color:#444">19</div>
<div class="t" style="left:0;width:28px;top:599px;text-align:center;font-size:15px;color:#444">20</div>
<div class="t" style="left:0;width:28px;top:618px;text-align:center;font-size:15px;color:#444">21</div>
<div class="t" style="left:0;width:28px;top:637px;text-align:center;font-size:15px;color:#444">22</div>
<div class="t" style="left:0;width:28px;top:656px;text-align:center;font-size:15px;color:#444">23</div>
<div class="a" style="left:0;top:672px;width:28px;height:6px;overflow:hidden"><div class="t" style="left:0;width:28px;top:1px;text-align:center;font-size:15px;color:#444">24</div></div>
<div class="a" style="left:0;top:216px;width:1002px;height:1px;background:#ababab"></div>
<div class="a" style="left:28px;top:198px;width:1px;height:480px;background:#ababab"></div>
<div class="a" style="left:1002px;top:216px;width:1px;height:462px;background:#ababab"></div>
<div class="a" style="left:0;top:678px;width:1003px;height:1px;background:#ababab"></div>
<div class="cell" style="left:28px;width:68px;top:220px;text-align:center;color:#e00000;font-weight:bold;">部门</div>
<div class="cell" style="left:96px;width:58px;top:220px;text-align:center;color:#e00000;font-weight:bold;">岗位</div>
<div class="cell" style="left:154px;width:62px;top:220px;text-align:center;color:#e00000;font-weight:bold;">工资</div>
<div class="cell" style="left:28px;width:68px;top:241px;text-align:center;">生一课</div>
<div class="cell" style="left:96px;width:58px;top:241px;text-align:center;">补焊</div>
<div class="cell" style="left:154px;width:62px;top:241px;text-align:center;">3860</div>
<div class="cell" style="left:28px;width:68px;top:262px;text-align:center;">生一课</div>
<div class="cell" style="left:96px;width:58px;top:262px;text-align:center;">补焊</div>
<div class="cell" style="left:154px;width:62px;top:262px;text-align:center;">3501</div>
<div class="cell" style="left:28px;width:68px;top:283px;text-align:center;">生一课</div>
<div class="cell" style="left:96px;width:58px;top:283px;text-align:center;">包装</div>
<div class="cell" style="left:154px;width:62px;top:283px;text-align:center;">3800</div>
<div class="cell" style="left:28px;width:68px;top:304px;text-align:center;">生三课</div>
<div class="cell" style="left:96px;width:58px;top:304px;text-align:center;">包装</div>
<div class="cell" style="left:154px;width:62px;top:304px;text-align:center;">3200</div>
<div class="cell" style="left:28px;width:68px;top:325px;text-align:center;">生三课</div>
<div class="cell" style="left:96px;width:58px;top:325px;text-align:center;">包装</div>
<div class="cell" style="left:154px;width:62px;top:325px;text-align:center;">3600</div>
<div class="cell" style="left:28px;width:68px;top:346px;text-align:center;">生三课</div>
<div class="cell" style="left:96px;width:58px;top:346px;text-align:center;">补焊</div>
<div class="cell" style="left:154px;width:62px;top:346px;text-align:center;">3645</div>
<div class="cell" style="left:28px;width:68px;top:367px;text-align:center;">SMT课</div>
<div class="cell" style="left:96px;width:58px;top:367px;text-align:center;">开机</div>
<div class="cell" style="left:154px;width:62px;top:367px;text-align:center;">4200</div>
<div class="cell" style="left:28px;width:68px;top:388px;text-align:center;">SMT课</div>
<div class="cell" style="left:96px;width:58px;top:388px;text-align:center;">开机</div>
<div class="cell" style="left:154px;width:62px;top:388px;text-align:center;">4520</div>
<div class="a" style="left:29px;top:217px;width:187px;height:1px;background:#fff"></div>
<div class="a" style="left:29px;top:217px;width:1px;height:188px;background:#fff"></div>
<div class="a" style="left:215px;top:217px;width:1px;height:188px;background:#fff"></div>
<div class="a" style="left:29px;top:404px;width:187px;height:1px;background:#fff"></div>
<div class="a" style="left:27px;top:215px;width:191px;height:2px;background:#217346"></div>
<div class="a" style="left:216px;top:215px;width:2px;height:187px;background:#217346"></div>
<div class="a" style="left:28px;top:405px;width:185px;height:2px;background:#217346"></div>
<div class="a" style="left:213px;top:402px;width:7px;height:7px;background:#217346;border:1px solid #fff"></div>
<div class="a" style="left:1003px;top:198px;width:21px;height:481px;background:#e6e6e6"></div>
<div class="a" style="left:1006px;top:200px;width:15px;height:15px;background:#fff;border:1px solid #c6c6c6"></div>
<svg style="left:1009px;top:205px" width="9" height="5" viewBox="0 0 9 5"><path d="M0 5L4.5 0 9 5z" fill="#777"/></svg>
<div class="a" style="left:1006px;top:214px;width:15px;height:430px;background:#fff;border:1px solid #c6c6c6"></div>
<div class="a" style="left:1007px;top:644px;width:13px;height:20px;background:#dadada"></div>
<div class="a" style="left:1006px;top:664px;width:15px;height:14px;background:#fff;border:1px solid #c6c6c6"></div>
<svg style="left:1009px;top:669px" width="9" height="5" viewBox="0 0 9 5"><path d="M0 0L4.5 5 9 0z" fill="#777"/></svg>
<div class="a" style="left:1014px;top:189px;width:8px;height:57px;border-radius:4px;background:rgba(70,70,70,0.85)"></div>
<div class="a" style="left:1015px;top:227px;width:6px;height:1px;background:#3fd45a"></div>
<div class="a" style="left:1015px;top:229px;width:6px;height:1px;background:#3fd45a"></div>
<div class="a" style="left:1015px;top:231px;width:6px;height:1px;background:#3fd45a"></div>
<div class="a" style="left:1015px;top:233px;width:6px;height:1px;background:#3fd45a"></div>
<div class="a" style="left:1015px;top:235px;width:6px;height:1px;background:#3fd45a"></div>
<div class="a" style="left:1015px;top:237px;width:6px;height:1px;background:#3fd45a"></div>
<div class="a" style="left:1015px;top:239px;width:6px;height:1px;background:#3fd45a"></div>
<div class="a" style="left:1015px;top:241px;width:6px;height:1px;background:#3fd45a"></div>
<div class="a" style="left:1015px;top:243px;width:6px;height:1px;background:#3fd45a"></div>
<div class="a" style="left:246px;top:196px;width:278px;height:380px;border:1px solid #3c4b5c;border-radius:6px 6px 4px 4px;background:linear-gradient(90deg,#b4cde8 0,#c6dbf1 20%,#cfe2f5 50%,#c3d9f0 80%,#b6cfe9 100%)"></div>
<div class="a" style="left:247px;top:197px;width:276px;height:378px;border:1px solid rgba(255,255,255,0.7);border-radius:5px 5px 3px 3px"></div>
<div class="a" style="left:252px;top:200px;width:190px;height:22px;background:radial-gradient(ellipse at 40% 50%,rgba(255,255,255,0.5),rgba(255,255,255,0) 70%)"></div>
<div class="a" style="left:315px;top:196px;width:16px;height:24px;background:radial-gradient(closest-side,rgba(80,95,115,0.32),rgba(80,95,115,0))"></div>
<div class="a" style="left:389px;top:198px;width:16px;height:24px;background:radial-gradient(closest-side,rgba(80,95,115,0.32),rgba(80,95,115,0))"></div>
<div class="dl" style="left:254px;top:204px;font-size:12px;color:#1a1a1a">分类汇总</div>
<div class="a" style="left:441px;top:197px;width:29px;height:19px;border:1px solid #4d5a68;border-top:none;border-radius:0 0 0 4px;background:linear-gradient(#dfe6ee 0,#c9d3de 45%,#a9b6c4 50%,#b7c3cf 100%)"></div>
<svg style="left:450px;top:199px" width="12" height="15" viewBox="0 0 12 15"><text x="6" y="12" font-size="14" font-weight="bold" font-family="Liberation Sans" text-anchor="middle" fill="#fff" stroke="#3a4450" stroke-width="2.2" paint-order="stroke">?</text></svg>
<div class="a" style="left:469px;top:197px;width:48px;height:19px;border:1px solid #5d2a22;border-top:none;border-left:1px solid #a2a2a2;border-radius:0 0 4px 0;background:linear-gradient(#e9b2a8 0,#dc9284 42%,#c13e2c 52%,#c4462f 80%,#d46a52 100%);box-shadow:inset 0 0 0 1px rgba(255,220,210,0.45)"></div>
<svg style="left:488px;top:201px" width="12" height="11" viewBox="0 0 12 11"><path d="M2 1.8l8 7.4M10 1.8l-8 7.4" stroke="#4a3a3a" stroke-width="4.2" stroke-linecap="round"/><path d="M2 1.8l8 7.4M10 1.8l-8 7.4" stroke="#fff" stroke-width="2.4" stroke-linecap="round"/></svg>
<div class="a" style="left:253px;top:225px;width:264px;height:344px;background:#f0f0f0;border:1px solid #7a8a9b"></div>
<div class="dl" style="left:260px;top:236px">分类字段(<u>A</u>):</div>
<div class="dl" style="left:260px;top:284px">汇总方式(<u>U</u>):</div>
<div class="dl" style="left:260px;top:332px">选定汇总项(<u>D</u>):</div>
<div class="a" style="left:260px;top:253px;width:250px;height:25px;background:#fff;border:1px solid #ababab"></div>
<div class="a" style="left:492px;top:254px;width:17px;height:23px;border:1px solid #9a9a9a;background:linear-gradient(#f4f4f4,#d9d9d9)"></div>
<svg style="left:497px;top:263px" width="8" height="5" viewBox="0 0 8 5"><path d="M0 0h8L4 4.5z" fill="#000"/></svg>
<div class="a" style="left:262px;top:258px;width:229px;height:16px;background:#3399ff;border:1px dotted #e07a1f"></div>
<div class="dl" style="left:264px;top:260px;color:#fff">部门</div>
<div class="a" style="left:260px;top:301px;width:250px;height:25px;background:#fff;border:1px solid #ababab"></div>
<div class="a" style="left:492px;top:302px;width:17px;height:23px;border:1px solid #9a9a9a;background:linear-gradient(#f4f4f4,#d9d9d9)"></div>
<svg style="left:497px;top:311px" width="8" height="5" viewBox="0 0 8 5"><path d="M0 0h8L4 4.5z" fill="#000"/></svg>
<div class="dl" style="left:264px;top:308px">求和</div>
<div class="a" style="left:260px;top:349px;width:250px;height:94px;background:#fff;border:1px solid #828790"></div>
<div class="a" style="left:491px;top:350px;width:18px;height:92px;background:#f0f0f0"></div>
<svg style="left:496px;top:357px" width="8" height="4" viewBox="0 0 8 4"><path d="M0 4L4 0 8 4z" fill="#a0a0a0"/></svg>
<svg style="left:496px;top:431px" width="8" height="4" viewBox="0 0 8 4"><path d="M0 0L4 4 8 0z" fill="#a0a0a0"/></svg>
<div class="a" style="left:277px;top:396px;width:214px;height:15px;background:#3399ff"></div>
<div class="cb" style="left:263px;top:352px;width:13px;height:13px"></div>
<div class="dl" style="left:279px;top:353px;color:#000">姓名</div>
<div class="cb" style="left:263px;top:367px;width:13px;height:13px"></div>
<div class="dl" style="left:279px;top:368px;color:#000">部门</div>
<div class="cb" style="left:263px;top:382px;width:13px;height:13px"></div>
<div class="dl" style="left:279px;top:383px;color:#000">岗位</div>
<div class="cb" style="left:263px;top:397px;width:13px;height:13px"></div>
<div class="dl" style="left:279px;top:398px;color:#fff">工资</div>
<svg style="left:265px;top:399px" width="10" height="10" viewBox="0 0 10 10"><path d="M1.5 5l2.5 3.5L8.5 1" fill="none" stroke="#3b4f8f" stroke-width="1.8"/></svg>
<div class="cb" style="left:260px;top:459px"></div>
<svg style="left:262px;top:461px" width="10" height="10" viewBox="0 0 10 10"><path d="M1.5 5l2.5 3.5L8.5 1" fill="none" stroke="#3b4f8f" stroke-width="1.8"/></svg>
<div class="dl" style="left:277px;top:460px">替换当前分类汇总(<u>C</u>)</div>
<div class="cb" style="left:260px;top:482px"></div>
<div class="dl" style="left:277px;top:483px">每组数据分页(<u>P</u>)</div>
<div class="cb" style="left:260px;top:505px"></div>
<svg style="left:262px;top:507px" width="10" height="10" viewBox="0 0 10 10"><path d="M1.5 5l2.5 3.5L8.5 1" fill="none" stroke="#3b4f8f" stroke-width="1.8"/></svg>
<div class="dl" style="left:277px;top:506px">汇总结果显示在数据下方(<u>S</u>)</div>
<div class="btn" style="left:260px;top:534px;width:81px">全部删除(<u>R</u>)</div>
<div class="btn" style="left:351px;top:534px;width:74px;border-color:#3c7fb1;box-shadow:inset 0 0 0 1px #a6dcf5">确定</div>
<div class="btn" style="left:435px;top:534px;width:74px">取消</div>
<div class="a" style="left:0;top:679px;width:1024px;height:27px;background:#e6e6e6"></div>
<svg style="left:27px;top:686px" width="5" height="9" viewBox="0 0 5 9"><path d="M5 0v9L0 4.5z" fill="#b4b4b4"/></svg>
<svg style="left:55px;top:686px" width="5" height="9" viewBox="0 0 5 9"><path d="M0 0v9l5-4.5z" fill="#b4b4b4"/></svg>
<div class="a" style="left:100px;top:683px;width:1px;height:19px;background:#9a9a9a"></div>
<div class="a" style="left:169px;top:678px;width:70px;height:25px;background:#fff;border-left:1px solid #9e9e9e;border-right:1px solid #9e9e9e"></div>
<div class="a" style="left:169px;top:701px;width:70px;height:2px;background:#217346"></div>
<div class="a" style="left:307px;top:683px;width:1px;height:19px;background:#9a9a9a"></div>
<div class="a" style="left:375px;top:683px;width:1px;height:19px;background:#9a9a9a"></div>
<div class="t" style="left:113px;top:684px;font-size:13px;color:#444">Sheet1</div>
<div class="t" style="left:182px;top:684px;font-size:13px;color:#217346">Sheet2</div>
<div class="t" style="left:251px;top:684px;font-size:13px;color:#444">Sheet3</div>
<div class="t" style="left:320px;top:684px;font-size:13px;color:#444">Sheet4</div>
<svg style="left:409px;top:683px" width="17" height="17" viewBox="0 0 17 17"><circle cx="8.5" cy="8.5" r="7.5" fill="none" stroke="#666" stroke-width="1.2"/><path d="M8.5 4.5v8M4.5 8.5h8" stroke="#666" stroke-width="1.4"/></svg>
<div class="a" style="left:614px;top:686px;width:2px;height:2px;background:#9a9a9a"></div>
<div class="a" style="left:614px;top:690px;width:2px;height:2px;background:#9a9a9a"></div>
<div class="a" style="left:614px;top:694px;width:2px;height:2px;background:#9a9a9a"></div>
<div class="a" style="left:631px;top:685px;width:16px;height:15px;background:#fff;border:1px solid #c6c6c6"></div>
<svg style="left:636px;top:688px" width="5" height="9" viewBox="0 0 5 9"><path d="M5 0v9L0 4.5z" fill="#777"/></svg>
<div class="a" style="left:646px;top:686px;width:25px;height:13px;background:#dadada"></div>
<div class="a" style="left:671px;top:685px;width:317px;height:15px;background:#fff;border:1px solid #c6c6c6"></div>
<div class="a" style="left:987px;top:685px;width:16px;height:15px;background:#fff;border:1px solid #c6c6c6"></div>
<svg style="left:993px;top:688px" width="5" height="9" viewBox="0 0 5 9"><path d="M0 0v9l5-4.5z" fill="#777"/></svg>
<div class="a" style="left:0;top:706px;width:1024px;height:22px;background:#f1f1f1;border-top:1px solid #cfcfcf"></div>
<div class="t" style="left:7px;top:710px;font-size:12px;color:#444">就绪</div>
<div class="a" style="left:727px;top:706px;width:38px;height:22px;background:#d4d4d4"></div>
<svg style="left:738px;top:709px" width="15" height="14" viewBox="0 0 15 14"><path d="M0.5 0.5h14v13H0.5zM0.5 4.8h14M0.5 9.2h14M5.2 0.5v13M9.8 0.5v13" fill="none" stroke="#777"/></svg>
<svg style="left:777px;top:710px" width="14" height="13" viewBox="0 0 14 13"><rect x="0.5" y="0.5" width="13" height="12" fill="none" stroke="#6f6f6f"/><rect x="3.5" y="2.5" width="7" height="8" fill="none" stroke="#6f6f6f"/><path d="M5 4.5h4M5 6.5h4M5 8.5h4" stroke="#6f6f6f"/></svg>
<svg style="left:815px;top:710px" width="14" height="13" viewBox="0 0 14 13"><rect x="0.5" y="0.5" width="13" height="12" fill="none" stroke="#6f6f6f"/><path d="M4.5 0.5V7.5M8.5 0.5V7.5M0.5 7.5H8.5" fill="none" stroke="#6f6f6f"/></svg>
<div class="a" style="left:846px;top:716px;width:6px;height:2px;background:#666"></div>
<div class="a" style="left:856px;top:716px;width:100px;height:1px;background:#999"></div>
<div class="a" style="left:904px;top:710px;width:4px;height:12px;background:#666"></div>
<svg style="left:960px;top:712px" width="9" height="9" viewBox="0 0 9 9"><path d="M4.5 0v9M0 4.5h9" stroke="#555" stroke-width="1.8"/></svg>
<div class="t" style="left:983px;top:710px;font-size:13px;color:#444">100%</div>
<div class="a" style="left:0;top:728px;width:1024px;height:40px;background:linear-gradient(90deg,#1e6b9e 0,#2474b4 110px,#3590d2 260px,#3a95d5 300px,#2c84c8 420px,#2679bf 560px,#2270b5 640px,#1f609f 720px,#1d5894 820px,#1c5089 920px,#1a4a82 1024px)"></div>
<div class="a" style="left:770px;top:729px;width:60px;height:39px;background:linear-gradient(48deg,rgba(255,255,255,0) 36%,rgba(200,225,245,0.4) 50%,rgba(255,255,255,0) 64%)"></div>
<div class="a" style="left:0;top:728px;width:1024px;height:1px;background:#102c4a"></div>
<div class="a" style="left:0;top:729px;width:1024px;height:1px;background:rgba(255,255,255,0.25)"></div>
<svg style="left:8px;top:730px" width="38" height="37" viewBox="0 0 38 37"><defs><radialGradient id="orb" cx="50%" cy="85%" r="65%"><stop offset="0" stop-color="#38d0ff"/><stop offset="0.35" stop-color="#1a86c8"/><stop offset="0.7" stop-color="#0d4f8a"/><stop offset="1" stop-color="#0a3563"/></radialGradient><linearGradient id="orbh" x1="0" y1="0" x2="0" y2="1"><stop offset="0" stop-color="#e8f2f8" stop-opacity="0.75"/><stop offset="1" stop-color="#a8c8e0" stop-opacity="0.1"/></linearGradient></defs><circle cx="19" cy="18.5" r="18" fill="url(#orb)" stroke="#5d9cc8" stroke-width="1"/><path d="M3 15A16 14 0 0 1 35 15Q19 20 3 15z" fill="url(#orbh)"/><path d="M10.5 10.5q4-2.5 8.5 0l-2 8.5q-4.3-2.5-8.5 0z" fill="#ef5a24"/><path d="M20 10.8q4.5 2.5 9 0l-2 8.5q-4.5 2.5-9 0z" fill="#8cc43c"/><path d="M8 20.5q4.3-2.5 8.5 0l-2 8.5q-4.3-2.5-8.5 0z" fill="#1aa3e8"/><path d="M17.8 20.8q4.5 2.5 9 0l-2 8.5q-4.5 2.5-9 0z" fill="#fdb913"/></svg>
<div class="a" style="left:60px;top:729px;width:53px;height:39px;border:1px solid rgba(8,30,55,0.75);border-radius:3px;background:linear-gradient(165deg,#9ccbe4 0,#78b6da 35%,#559fcf 65%,#4592c6 100%);box-shadow:inset 0 0 0 1px rgba(255,255,255,0.5)"></div>
<div class="a" style="left:122px;top:729px;width:58px;height:39px;border:1px solid rgba(8,30,55,0.75);border-radius:3px;background:linear-gradient(165deg,#d3ebf7 0,#a9d7f0 30%,#8ccaec 55%,#6fb9e4 100%);box-shadow:inset 0 0 0 1px rgba(255,255,255,0.5)"></div>
<div class="a" style="left:184px;top:729px;width:58px;height:39px;border:1px solid rgba(8,30,55,0.75);border-radius:3px;background:linear-gradient(165deg,#c0e2f4 0,#98cfee 30%,#7fc2e8 55%,#66b3e0 100%);box-shadow:inset 0 0 0 1px rgba(255,255,255,0.5)"></div>
<div class="a" style="left:114px;top:730px;width:4px;height:38px;border:1px solid rgba(8,30,55,0.6);border-radius:2px;background:#6cb0dc"></div>
<svg style="left:70px;top:734px" width="32" height="30" viewBox="0 0 32 30"><path d="M1.5 2.5h9l1.5 1.5h17v20h-27.5z" fill="#f2d27e" stroke="#c9a24a"/><rect x="3" y="2.5" width="3.5" height="2" fill="#22b022"/><rect x="6.5" y="2.5" width="4" height="2" fill="#fff"/><path d="M9.5 5h9l1 1.5h10v18h-19.5z" fill="#f4d888" stroke="#c9a24a"/><rect x="11" y="5" width="3.5" height="2" fill="#d42020"/><rect x="14.5" y="5" width="4" height="2" fill="#fff"/><path d="M18.5 7.5h10l1.5 1.5v15.5h-11.5z" fill="#f6dd92" stroke="#c9a24a"/><rect x="20" y="7.5" width="3" height="2" fill="#1e8ae0"/><rect x="23" y="7.5" width="5" height="2" fill="#fff"/><path d="M1.5 10.5h28.5v14.5H1.5z" fill="#f8e5a8" stroke="#c9a24a"/><path d="M5.5 26.5v-9.5h19.5v9.5h-4v-5.5H9.5v5.5z" fill="#a8dcf4" stroke="#5aa8d8"/><path d="M8 18l3-3" stroke="#fff" stroke-width="1.2"/></svg>
<svg style="left:136px;top:733px" width="30" height="30" viewBox="0 0 30 30"><rect x="16.5" y="3.5" width="13" height="23" fill="#fff" stroke="#1e7145"/><rect x="18.5" y="5.5" width="4" height="2.2" fill="#1e7145"/><rect x="23.5" y="5.5" width="4.5" height="2.2" fill="#1e7145"/><rect x="18.5" y="8.8" width="4" height="2.2" fill="#1e7145"/><rect x="23.5" y="8.8" width="4.5" height="2.2" fill="#1e7145"/><rect x="18.5" y="12.1" width="4" height="2.2" fill="#1e7145"/><rect x="23.5" y="12.1" width="4.5" height="2.2" fill="#1e7145"/><rect x="18.5" y="15.4" width="4" height="2.2" fill="#1e7145"/><rect x="23.5" y="15.4" width="4.5" height="2.2" fill="#1e7145"/><rect x="18.5" y="18.7" width="4" height="2.2" fill="#1e7145"/><rect x="23.5" y="18.7" width="4.5" height="2.2" fill="#1e7145"/><rect x="18.5" y="22.0" width="4" height="2.2" fill="#1e7145"/><rect x="23.5" y="22.0" width="4.5" height="2.2" fill="#1e7145"/><path d="M0 4.5L18 0V30L0 25.5z" fill="#1e7145"/><path d="M4 9.5h3.3l2.2 3.8 2.2-3.8h3.3l-3.8 5.8 3.8 5.8h-3.3l-2.2-3.8-2.2 3.8H4l3.8-5.8z" fill="#fff"/></svg>
<svg style="left:198px;top:733px" width="30" height="30" viewBox="0 0 30 30"><rect x="16.5" y="3.5" width="13" height="23" fill="#fff" stroke="#2b579a"/><path d="M19 6.5h9.5M19 9.5h9.5M19 12.5h9.5M19 15.5h9.5M19 18.5h9.5M19 21.5h9.5" stroke="#2b579a" stroke-width="1.3"/><path d="M0 4.5L18 0V30L0 25.5z" fill="#2b579a"/><path d="M2.8 10h2.5l1.5 7.5 1.9-7.5h2.3l1.9 7.5 1.5-7.5h2.3l-2.6 11h-2.3l-1.9-7-1.9 7H5.4z" fill="#fff"/></svg>
<svg style="left:733px;top:738px" width="17" height="15" viewBox="0 0 17 15"><path d="M1 2.5q3 2 6 0.5t6-1" fill="none" stroke="#b8c0c8" stroke-width="1.1"/><rect x="0.5" y="7" width="16" height="7.5" rx="1" fill="#6d7885" stroke="#d6dce2"/><path d="M2.5 9h2M5.5 9h2M8.5 9h2M11.5 9h2M2.5 11.5h2M5.5 11.5h2M8.5 11.5h2M11.5 11.5h2" stroke="#e6eaee"/></svg>
<svg style="left:772px;top:740px" width="11" height="16" viewBox="0 0 11 16"><rect x="1" y="0.5" width="9" height="5" fill="#eee" stroke="#222"/><path d="M4 2.5h1M6 2.5h1" stroke="#333"/><rect x="0.5" y="5" width="10" height="10.5" rx="1" fill="#3cb83c" stroke="#1a2a1a"/><path d="M5.5 6.5v7.5M3.5 8.5v2l2 1.5M7.5 8v2.5l-2 1.5" fill="none" stroke="#fff" stroke-width="1.1"/></svg>
<svg style="left:800px;top:739px" width="17" height="17" viewBox="0 0 17 17"><rect x="3" y="0.5" width="5" height="4" fill="#888"/><rect x="2" y="4" width="7" height="8" fill="#6a6a6a"/><rect x="4" y="12" width="3" height="3" fill="#555"/><circle cx="12" cy="12" r="4.5" fill="#3daa3d" stroke="#fff" stroke-width="0.7"/><path d="M9.8 12l1.7 1.7 2.8-3" fill="none" stroke="#fff" stroke-width="1.3"/></svg>
<svg style="left:824px;top:741px" width="16" height="16" viewBox="0 0 16 16"><circle cx="8" cy="8" r="7.5" fill="#f2d400"/><path d="M4 2.2A7 7 0 0 1 15 7" fill="none" stroke="#4aa02c" stroke-width="1.6"/><path d="M12 13.8A7 7 0 0 1 1 9" fill="none" stroke="#4aa02c" stroke-width="1.6"/><path d="M8 4.5v7M4.5 8h7" stroke="#1e7a1e" stroke-width="2"/></svg>
<svg style="left:848px;top:741px" width="17" height="16" viewBox="0 0 17 16"><path d="M1 4.5l7-3.5 3 1.5 3-1 2 2-1.5 1 1 5-4 4-2-1.5-5-3z" fill="#e8e8e8" stroke="#222" stroke-width="0.9"/><path d="M3 5.5l5 3 4-2.5" fill="none" stroke="#777" stroke-width="0.8"/><circle cx="8" cy="5.2" r="0.8" fill="#2233ff"/><path d="M0.5 12.5l5-3" stroke="#ff3030" stroke-width="1"/><path d="M0.5 13.5l5-3" stroke="#ffd000" stroke-width="1"/><path d="M0.5 14.5l5-3" stroke="#30c030" stroke-width="1"/><path d="M0.5 15.5l5-3" stroke="#3050ff" stroke-width="1"/></svg>
<svg style="left:872px;top:743px" width="16" height="11" viewBox="0 0 16 11"><rect x="0" y="8.5" width="2.4" height="2.5" fill="#fff"/><rect x="3.4" y="6.5" width="2.4" height="4.5" fill="#fff"/><rect x="6.8" y="4.5" width="2.4" height="6.5" fill="#fff"/><rect x="10.2" y="2.3" width="2.4" height="8.7" fill="#fff"/><rect x="13.6" y="0" width="2.4" height="11" fill="#fff"/></svg>
<svg style="left:898px;top:741px" width="14" height="15" viewBox="0 0 14 15"><path d="M0 5h3l5-4v13l-5-4H0z" fill="#f4f4f4"/><path d="M10.5 4.5q2 3 0 6" fill="none" stroke="#f4f4f4" stroke-width="1.2"/></svg>
<div class="t" style="left:949px;top:734px;font-size:13px;color:#fff">10:27</div>
<div class="t" style="left:931px;top:752px;font-size:13px;color:#fff">2022-04-05</div>
<div class="a" style="left:1009px;top:729px;width:15px;height:39px;border:1px solid rgba(10,30,60,0.7);border-right:none;background:linear-gradient(90deg,rgba(255,255,255,0.25),rgba(255,255,255,0.08))"></div>
</body></html>
